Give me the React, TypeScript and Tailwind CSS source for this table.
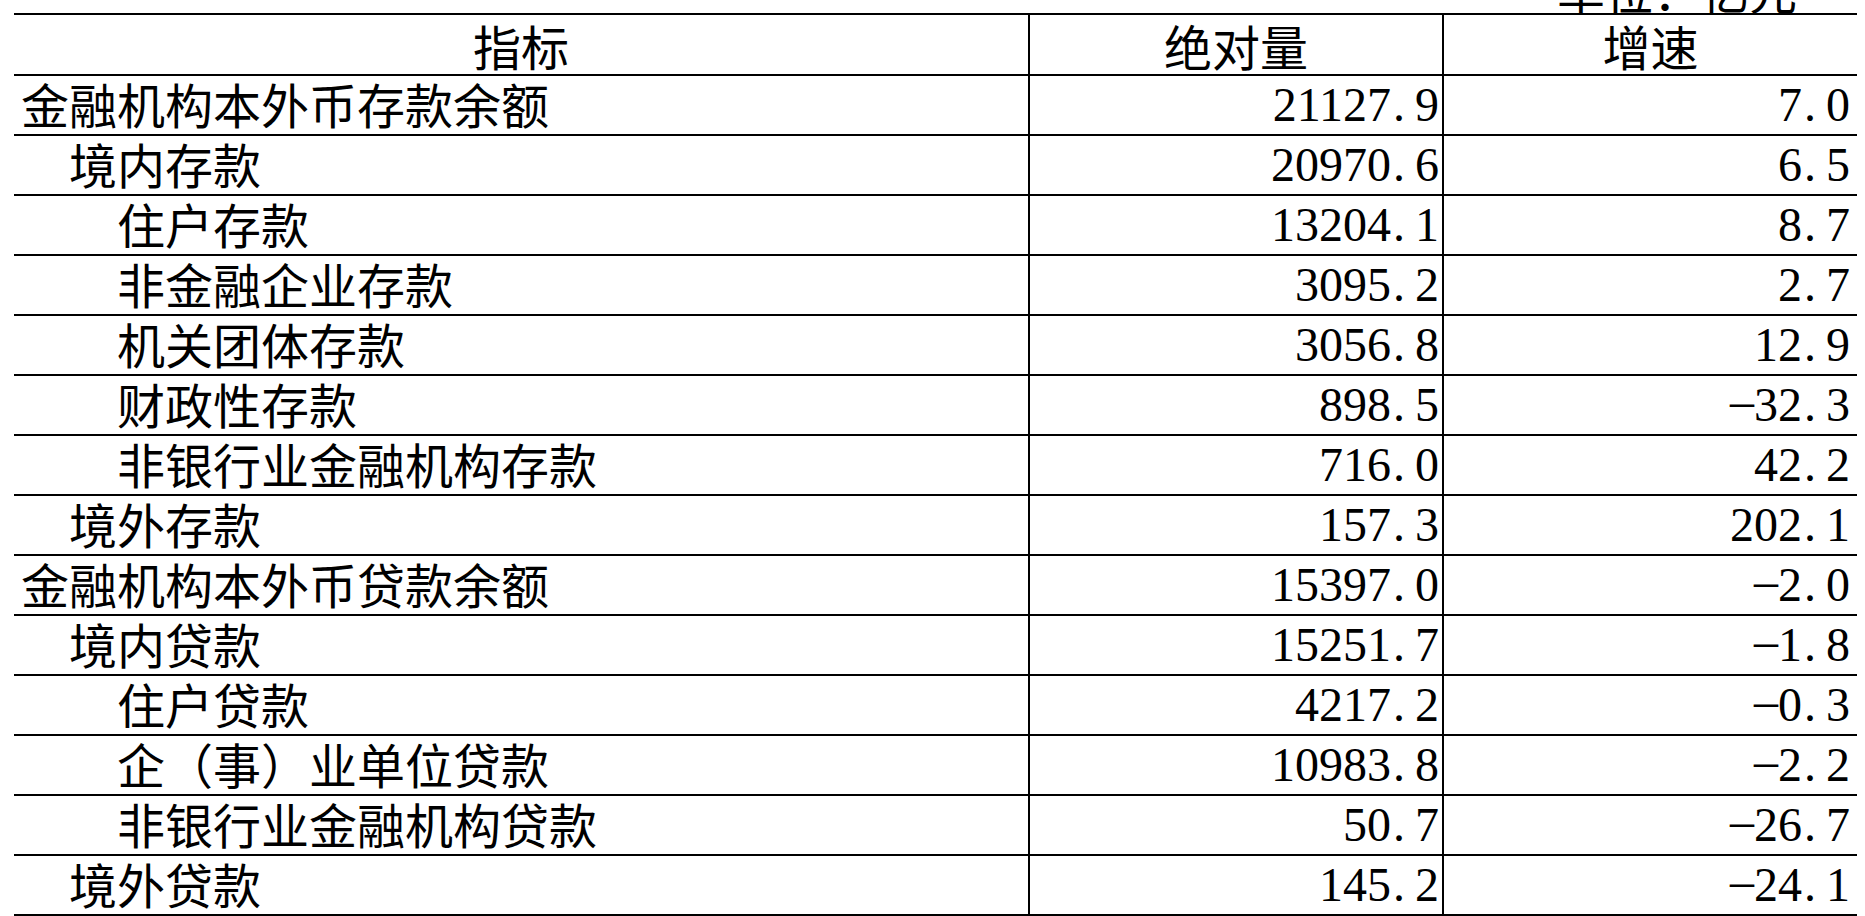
const rows: [number, string, string, string][] = [
  [0, "金融机构本外币存款余额", "21127.9", "7.0"],
  [1, "境内存款", "20970.6", "6.5"],
  [2, "住户存款", "13204.1", "8.7"],
  [2, "非金融企业存款", "3095.2", "2.7"],
  [2, "机关团体存款", "3056.8", "12.9"],
  [2, "财政性存款", "898.5", "-32.3"],
  [2, "非银行业金融机构存款", "716.0", "42.2"],
  [1, "境外存款", "157.3", "202.1"],
  [0, "金融机构本外币贷款余额", "15397.0", "-2.0"],
  [1, "境内贷款", "15251.7", "-1.8"],
  [2, "住户贷款", "4217.2", "-0.3"],
  [2, "企（事）业单位贷款", "10983.8", "-2.2"],
  [2, "非银行业金融机构贷款", "50.7", "-26.7"],
  [1, "境外贷款", "145.2", "-24.1"],
];

const indent = ["pl-[7px]", "pl-[55px]", "pl-[103px]"];

const cjk = "font-['Noto_Sans_CJK_SC',sans-serif]";
const num = "font-['Liberation_Serif',serif]";

// half-width cells like the old song-style table font: every char 24px wide
function Num({ value }: { value: string }) {
  const neg = value.startsWith("-");
  const [whole, dec] = (neg ? value.slice(1) : value).split(".");
  return (
    <span className={`${num} whitespace-nowrap`}>
      {neg && <span className="relative -top-[4px] inline-block w-[24px]">–</span>}
      {whole}
      <span className="inline-block w-[24px] pl-[2px] text-left">.</span>
      {dec}
    </span>
  );
}

export default function App() {
  return (
    <div className="min-h-screen overflow-hidden bg-white pl-[14px] text-[48px] leading-[48px] text-black">
      <div className="w-[1843px]">
        <div className={`flex h-[13px] items-end justify-end pr-[60px] ${cjk}`}>
          <span className="shrink-0 leading-[48px]">单位：亿元</span>
        </div>

        <div className="border-t-2 border-black">
          <div className={`grid h-[61px] grid-cols-[1016px_414px_413px] border-b-2 border-black ${cjk}`}>
            <div className="flex items-center justify-center border-r-2 border-black">指标</div>
            <div className="flex items-center justify-center border-r-2 border-black">绝对量</div>
            <div className="flex items-center justify-center">增速</div>
          </div>

          {rows.map(([level, label, abs, rate]) => (
            <div
              key={label}
              className="grid h-[60px] grid-cols-[1016px_414px_413px] border-b-2 border-black"
            >
              <div className={`flex items-center border-r-2 border-black ${indent[level]} ${cjk}`}>
                <span className="-translate-y-[2px]">{label}</span>
              </div>
              <div className="flex items-center justify-end border-r-2 border-black pr-[3px]">
                <Num value={abs} />
              </div>
              <div className="flex items-center justify-end pr-[7px]">
                <Num value={rate} />
              </div>
            </div>
          ))}
        </div>
      </div>
    </div>
  );
}
